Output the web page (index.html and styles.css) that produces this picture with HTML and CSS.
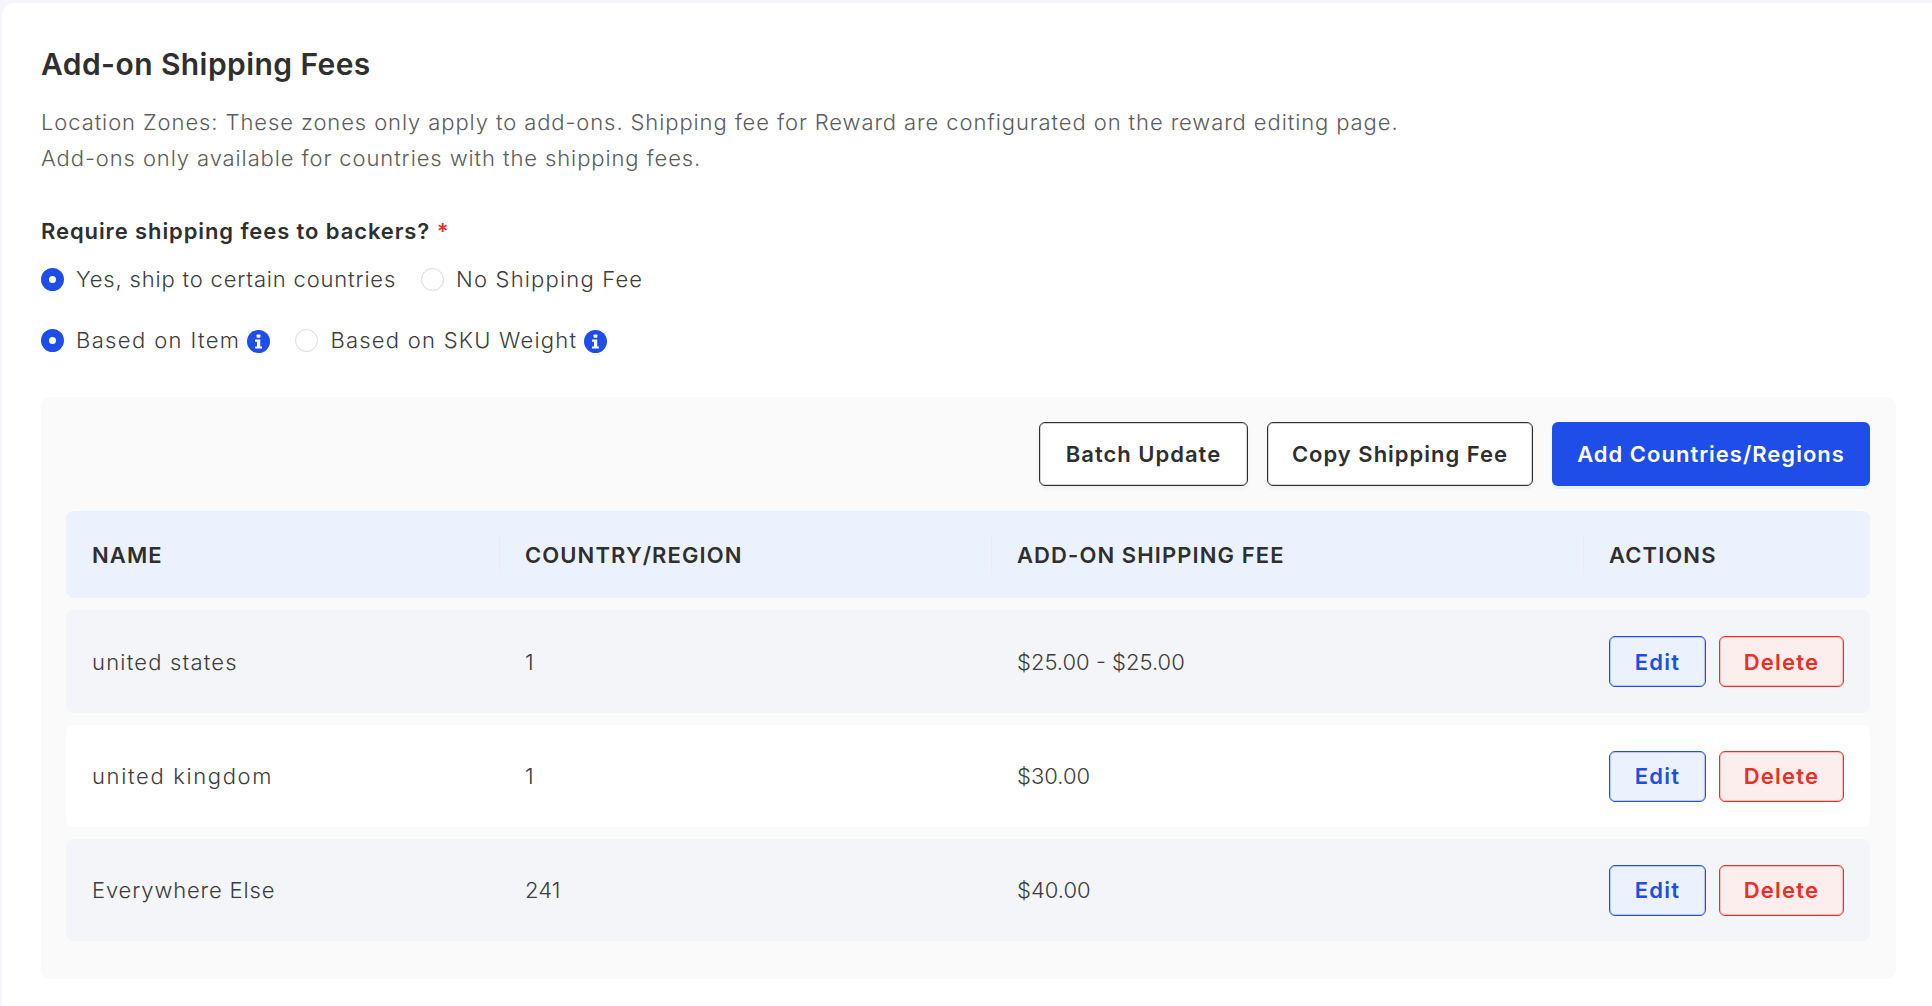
FILE: index.html
```html
<!DOCTYPE html>
<html lang="en">
<head>
<meta charset="utf-8">
<title>Add-on Shipping Fees</title>
<link rel="stylesheet" href="styles.css">
</head>
<body>
<main class="card">
  <h1 class="title">Add-on Shipping Fees</h1>
  <p class="desc">Location Zones: These zones only apply to add-ons. Shipping fee for Reward are configurated on the reward editing page.<br>Add-ons only available for countries with the shipping fees.</p>
  <div class="question">Require shipping fees to backers? <span class="req">*</span></div>
  <div class="radios first">
    <label class="radio sp-yes"><span class="dot on"></span>Yes, ship to certain countries</label>
    <label class="radio"><span class="dot"></span>No Shipping Fee</label>
  </div>
  <div class="radios second">
    <label class="radio sp-item"><span class="dot on"></span>Based on Item<svg class="info" viewBox="0 0 24 24"><circle cx="12" cy="12" r="12"/><rect class="i" x="10" y="4.6" width="4" height="3.4" rx="1"/><path class="i" d="M8.4 10h5.4v7.2h1.8v2.2H8.4v-2.2h2v-5H8.4z"/></svg></label>
    <label class="radio sp-sku"><span class="dot"></span>Based on SKU Weight<svg class="info" viewBox="0 0 24 24"><circle cx="12" cy="12" r="12"/><rect class="i" x="10" y="4.6" width="4" height="3.4" rx="1"/><path class="i" d="M8.4 10h5.4v7.2h1.8v2.2H8.4v-2.2h2v-5H8.4z"/></svg></label>
  </div>
  <section class="panel">
    <div class="toolbar">
      <button class="btn outline w-batch">Batch Update</button>
      <button class="btn outline w-copy">Copy Shipping Fee</button>
      <button class="btn primary w-add">Add Countries/Regions</button>
    </div>
    <div class="row head">
      <div class="cell">NAME</div>
      <div class="cell sep">COUNTRY/REGION</div>
      <div class="cell sep">ADD-ON SHIPPING FEE</div>
      <div class="cell sep">ACTIONS</div>
    </div>
    <div class="row grey tall">
      <div class="cell name n-states">united states</div>
      <div class="cell">1</div>
      <div class="cell">$25.00 - $25.00</div>
      <div class="cell actions"><button class="act edit">Edit</button><button class="act del">Delete</button></div>
    </div>
    <div class="row white">
      <div class="cell name n-kingdom">united kingdom</div>
      <div class="cell">1</div>
      <div class="cell">$30.00</div>
      <div class="cell actions"><button class="act edit">Edit</button><button class="act del">Delete</button></div>
    </div>
    <div class="row grey">
      <div class="cell name n-else">Everywhere Else</div>
      <div class="cell">241</div>
      <div class="cell">$40.00</div>
      <div class="cell actions"><button class="act edit">Edit</button><button class="act del">Delete</button></div>
    </div>
  </section>
</main>
</body>
</html>
```
FILE: styles.css
```css
* { box-sizing: border-box; }
html, body { height: 100%; }
body {
  margin: 0;
  padding: 3px 0 0 2px;
  background: #f4f6fa;
  color: #2f2f2f;
  font-family: Inter, "Noto Sans", "Liberation Sans", sans-serif;
  overflow: hidden;
}
.card {
  height: 1003px;
  background: #fff;
  border-radius: 12px 0 0 0;
  padding: 42px 36px 0 39px;
}
.title {
  margin: 0;
  font-size: 30px;
  line-height: 38px;
  font-weight: 600;
  letter-spacing: .42px;
  color: #2f2f2f;
}
.desc {
  margin: 21px 0 0;
  font-size: 22px;
  line-height: 36px;
  font-weight: 300;
  letter-spacing: .9px;
  color: #5c5c5c;
}
.question {
  margin-top: 39px;
  font-size: 22px;
  line-height: 32px;
  font-weight: 600;
  letter-spacing: .9px;
}
.req { color: #ee2e24; }
.radios { display: flex; gap: 25px; font-size: 22px; line-height: 32px; font-weight: 300; color: #3c3c3c; letter-spacing: 1.18px; }
.sp-yes { letter-spacing: .82px; }
.sp-item { letter-spacing: 1.37px; }
.sp-sku { letter-spacing: 1.24px; }
.first { margin-top: 16px; }
.second { margin-top: 29px; }
.radio { display: flex; align-items: center; }
.dot {
  width: 23px; height: 23px; margin-right: 12px;
  border-radius: 50%;
  border: 1px solid #d9d9d9;
  background: #fff;
}
.dot.on { border: 8px solid #1f4de8; }
.info { width: 23px; height: 23px; margin: 2px 0 0 7px; fill: #1f4de8; }
.info .i { fill: #fff; }
.panel {
  margin-top: 41px;
  height: 582px;
  padding: 25px 26px 0 25px;
  background: #fafafa;
  border-radius: 10px;
}
.toolbar { display: flex; justify-content: flex-end; gap: 19px; margin-bottom: 25px; }
.btn {
  height: 64px;
  border-radius: 6px;
  font: 600 22px/1 Inter, "Noto Sans", sans-serif;
  letter-spacing: 1px;
  cursor: pointer;
}
.w-batch { width: 209px; }
.w-copy { width: 266px; }
.w-add { width: 318px; }
.outline { background: #fff; border: 1px solid #2f2f2f; color: #2f2f2f; box-shadow: 0 3px 4px rgba(0,0,0,.04), inset 0 0 0 1px rgba(47,47,47,.2); }
.primary { background: #1f4de8; border: 0; color: #fff; box-shadow: 0 3px 0 #e6edfb; }
.row {
  display: grid;
  grid-template-columns: 433px 492px 592px 1fr;
  align-items: center;
  border-radius: 8px;
  margin-bottom: 12px;
  height: 102px;
  font-size: 22px;
  font-weight: 300;
  color: #3c3c3c;
}
.row .cell { padding-left: 26px; }
.head { height: 87px; background: #ebf2fd; font-weight: 600; color: #2f2f2f; letter-spacing: 1.1px; }
.grey { background: #f4f5f8; }
.white { background: #fff; }
.tall { height: 103px; }
.n-states { letter-spacing: 1.2px; }
.n-kingdom { letter-spacing: 1.65px; }
.n-else { letter-spacing: .85px; }
.sep { position: relative; }
.sep::before {
  content: "";
  position: absolute;
  left: 0; top: -6px; bottom: -6px;
  width: 1px;
  background: #e8ecf3;
}
.actions { display: flex; gap: 13px; }
.act {
  height: 51px;
  border-radius: 6px;
  font: 600 22px/1 Inter, "Noto Sans", sans-serif;
  letter-spacing: 1.2px;
  cursor: pointer;
}
.edit { width: 97px; background: #ebf2fd; border: 1px solid #1f4de8; color: #1f4de8; box-shadow: inset 0 0 0 1px rgba(31,77,232,.25); }
.del { width: 125px; background: #fceeec; border: 1px solid #ee2e24; color: #ee2e24; box-shadow: inset 0 0 0 1px rgba(238,46,36,.25); }
```
